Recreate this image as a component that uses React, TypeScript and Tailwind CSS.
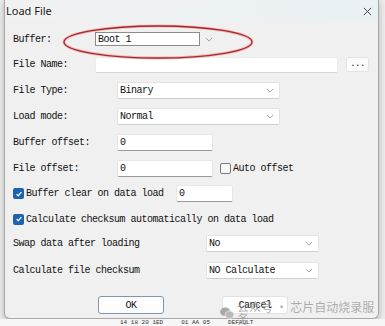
import React from "react";

const mono = { fontFamily: '"Liberation Mono", "DejaVu Sans Mono", monospace' };

const Chevron = ({ className = "" }: { className?: string }) => (
  <svg viewBox="0 0 10 6" className={"h-[5px] w-[8px] " + className} fill="none" stroke="#8a8a8a" strokeWidth="1">
    <path d="M1 1l4 4 4-4" />
  </svg>
);

const Select = ({ value, w }: { value: string; w: string }) => (
  <div className={"flex h-[17px] items-center justify-between rounded-[2px] border border-[#e3e3e3] border-b-[#cfcfcf] bg-white pl-[2px] pr-[5px] " + w}>
    <span>{value}</span>
    <Chevron />
  </div>
);

const Field = ({ value, w }: { value: string; w: string }) => (
  <div className={"flex h-[17px] items-center rounded-[2px] border border-[#e6e6e6] border-b-[#9a9a9a] bg-white pl-[2px] " + w}>
    {value}
  </div>
);

const Check = ({ on }: { on: boolean }) =>
  on ? (
    <div className="flex h-[11px] w-[11px] items-center justify-center rounded-[2px] bg-[#1c64b0]">
      <svg viewBox="0 0 10 10" className="h-[8px] w-[8px]" fill="none" stroke="white" strokeWidth="1.5">
        <path d="M2 5.2l2 2 4-4.5" />
      </svg>
    </div>
  ) : (
    <div className="h-[11px] w-[11px] rounded-[2px] border border-[#7a7a7a] bg-[#f7f7f7]" />
  );

export default function App() {
  return (
    <div className="relative h-[326px] w-[385px] overflow-hidden bg-[#ececec]">
      <div className="absolute bottom-0 left-0 flex h-[7px] w-full items-end gap-[18px] bg-[#f6f6f6] pl-[120px] text-[6px] leading-[6px] text-[#333]" style={mono}>
        <span>14 18 20 1ED</span>
        <span>01 AA 05</span>
        <span>DEFAULT</span>
      </div>
      <div className="ml-[4px] flex h-[319px] w-[375px] flex-col rounded-b-[6px] border border-t-0 border-[#a8a8a8] bg-[#f0f0f0] text-[10px] tracking-[-0.5px] text-[#111] shadow-[0_2px_6px_rgba(0,0,0,0.25)]">
        <div className="flex h-[22px] items-center justify-between bg-gradient-to-r from-[#f1f1f1] to-[#e9f1f4] pl-[1px] pr-[6px]">
          <span className="text-[11px] tracking-normal text-[#222]" style={{ fontFamily: '"Noto Sans", sans-serif' }}>
            Load File
          </span>
          <svg viewBox="0 0 10 10" className="h-[9px] w-[9px]" stroke="#333" strokeWidth="1">
            <path d="M1 1l8 8M9 1l-8 8" />
          </svg>
        </div>

        <div className="flex flex-col pl-[8px] pt-[4px]" style={mono}>
          <div className="flex h-[26px] items-center">
            <span className="w-[82px]">Buffer:</span>
            <div className="flex h-[14px] w-[105px] items-center border border-[#8c8c8c] bg-white pl-[2px] text-[#111]">Boot 1</div>
            <Chevron className="ml-[5px]" />
          </div>
          <div className="flex h-[25px] items-center">
            <span className="w-[82px]">File Name:</span>
            <div className="h-[16px] w-[243px] rounded-[2px] border border-[#ececec] border-b-[#d6d6d6] bg-white" />
            <div className="ml-[8px] flex h-[15px] w-[23px] items-center justify-center rounded-[2px] border border-[#e4e4e4] bg-[#fbfbfb] text-[9px]">...</div>
          </div>
          <div className="flex h-[27px] items-center">
            <span className="w-[104px]">File Type:</span>
            <Select value="Binary" w="w-[163px]" />
          </div>
          <div className="flex h-[25px] items-center">
            <span className="w-[104px]">Load mode:</span>
            <Select value="Normal" w="w-[163px]" />
          </div>
          <div className="flex h-[26px] items-center">
            <span className="w-[104px]">Buffer offset:</span>
            <Field value="0" w="w-[96px]" />
          </div>
          <div className="flex h-[26px] items-center">
            <span className="w-[104px]">File offset:</span>
            <Field value="0" w="w-[96px]" />
            <div className="ml-[7px]">
              <Check on={false} />
            </div>
            <span className="ml-[2px]">Auto offset</span>
          </div>
          <div className="flex h-[25px] items-center">
            <Check on={true} />
            <span className="ml-[2px] w-[150px]">Buffer clear on data load</span>
            <Field value="0" w="w-[57px]" />
          </div>
          <div className="flex h-[26px] items-center">
            <Check on={true} />
            <span className="ml-[2px]">Calculate checksum automatically on data load</span>
          </div>
          <div className="flex h-[23px] items-center">
            <span className="w-[193px]">Swap data after loading</span>
            <Select value="No" w="w-[113px]" />
          </div>
          <div className="flex h-[30px] items-center">
            <span className="w-[193px]">Calculate file checksum</span>
            <Select value="NO Calculate" w="w-[113px]" />
          </div>
          <div className="mt-[11px] flex gap-[58px] pl-[85px]">
            <div className="flex h-[18px] w-[66px] items-center justify-center rounded-[3px] border border-[#7f97ad] bg-[#fdfdfd]">OK</div>
            <div className="flex h-[18px] w-[66px] items-center justify-center rounded-[3px] border border-[#e2e2e2] bg-white">Cancel</div>
          </div>
        </div>
      </div>

      <svg className="pointer-events-none absolute left-[62px] top-[24px]" width="192" height="36" viewBox="0 0 192 36">
        <ellipse cx="96" cy="18" rx="94" ry="16" fill="none" stroke="#f2b8b8" strokeWidth="3" />
        <ellipse cx="96" cy="18" rx="94" ry="16" fill="none" stroke="#a52a2a" strokeWidth="1.3" />
      </svg>

      <div className="pointer-events-none absolute left-[220px] top-[301px] flex items-center gap-[3px] text-[12px] leading-none text-[#9a9a9a]/80" style={{ fontFamily: '"Noto Sans CJK SC", sans-serif' }}>
        <svg viewBox="0 0 16 14" className="h-[12px] w-[14px]" fill="#a8a8a8">
          <ellipse cx="6" cy="5.5" rx="6" ry="5" />
          <ellipse cx="11" cy="9" rx="5" ry="4.2" fill="#b8b8b8" stroke="#f0f0f0" strokeWidth="0.8" />
        </svg>
        <span>公众号 · 芯片自动烧录服务</span>
      </div>
    </div>
  );
}
